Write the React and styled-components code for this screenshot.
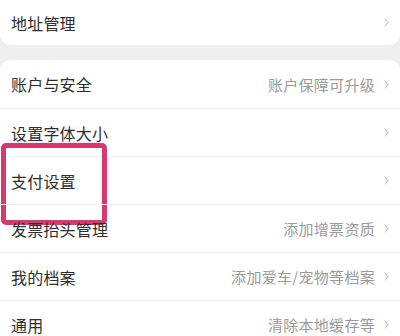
import React from "react";
import styled, { createGlobalStyle } from "styled-components";

const Global = createGlobalStyle`
  html, body { margin: 0; padding: 0; background: #efefef; }
  body { font-family: "Noto Sans CJK SC", "Noto Sans", sans-serif; width: 400px; height: 336px; overflow: hidden; }
`;

const Page = styled.div`
  display: flex;
  flex-direction: column;
  gap: 15px;
  width: 400px;
`;

const Card = styled.div`
  background: #fff;
  border-radius: ${p => (p.$clipTop ? "0 0 11px 11px" : "11px")};
  overflow: hidden;
`;

const Row = styled.div`
  position: relative;
  display: flex;
  align-items: center;
  height: ${p => p.$h || 48}px;
  padding: 0 11px 0 11px;
  box-sizing: border-box;
  & + & { border-top: 1px solid #f1f1f1; }
`;

const Label = styled.span`
  flex: 1;
  font-size: 16px;
  color: #2e2e2e;
  letter-spacing: 0.2px;
`;

const Hint = styled.span`
  font-size: 15px;
  color: #9a9a9a;
  letter-spacing: 0.3px;
  margin-right: 9px;
`;

const Chevron = styled.svg`
  width: 5px;
  height: 9px;
  flex: none;
`;

const Highlight = styled.div`
  position: absolute;
  left: 1px;
  top: -14px;
  width: 106px;
  height: 82px;
  box-sizing: border-box;
  border: 5px solid #d6386f;
  border-radius: 5px;
  pointer-events: none;
`;

const Arrow = () => (
  <Chevron viewBox="0 0 5 9">
    <path d="M1 1 L4 4.5 L1 8" fill="none" stroke="#b0b0b0" strokeWidth="1" strokeLinecap="round" strokeLinejoin="round" />
  </Chevron>
);

const items = [
  { label: "账户与安全", hint: "账户保障可升级" },
  { label: "设置字体大小" },
  { label: "支付设置", mark: true },
  { label: "发票抬头管理", hint: "添加增票资质" },
  { label: "我的档案", hint: "添加爱车/宠物等档案" },
  { label: "通用", hint: "清除本地缓存等" },
];

export default function App() {
  return (
    <>
      <Global />
      <Page>
        <Card $clipTop>
          <Row $h={45}>
            <Label>地址管理</Label>
            <Arrow />
          </Row>
        </Card>
        <Card>
          {items.map(it => (
            <Row key={it.label}>
              <Label>{it.label}</Label>
              {it.hint && <Hint>{it.hint}</Hint>}
              <Arrow />
              {it.mark && <Highlight />}
            </Row>
          ))}
        </Card>
      </Page>
    </>
  );
}
